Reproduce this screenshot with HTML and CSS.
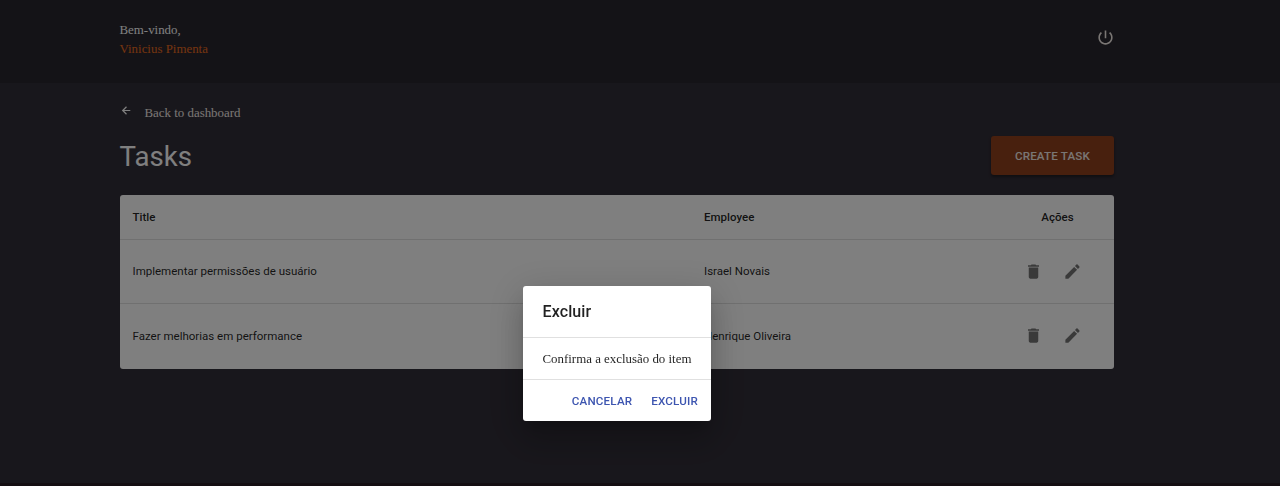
FILE: index.html
```html
<!DOCTYPE html>
<html lang="pt-BR">
<head>
<meta charset="utf-8">
<title>Tasks</title>
<link rel="stylesheet" href="styles.css">
</head>
<body>
<div class="page">
  <header class="header">
    <div class="container header-content">
      <div class="profile"><span>Bem-vindo,</span><span class="name">Vinicius Pimenta</span></div>
      <svg class="power" viewBox="0 0 24 24"><path d="M13 3h-2v10h2V3zm4.830 2.170l-1.420 1.420C17.990 7.860 19 9.810 19 12c0 3.870-3.130 7-7 7s-7-3.130-7-7c0-2.190 1.010-4.140 2.580-5.420L6.170 5.170C4.230 6.820 3 9.260 3 12c0 4.970 4.030 9 9 9s9-4.030 9-9c0-2.740-1.230-5.180-3.170-6.830z"/></svg>
    </div>
  </header>
  <main class="container main">
    <a class="back"><svg class="arrow" viewBox="0 0 24 24"><path d="M19 12H5M12 19l-7-7 7-7"/></svg><span>Back to dashboard</span></a>
    <div class="title-row"><h1>Tasks</h1><button class="create">CREATE TASK</button></div>
    <section class="table">
      <div class="row head"><span>Title</span><span>Employee</span><span class="center">Ações</span></div>
      <div class="row">
        <span>Implementar permissões de usuário</span><span>Israel Novais</span>
        <div class="actions">
          <svg viewBox="0 0 24 24"><path d="M6 19c0 1.100.9 2 2 2h8c1.100 0 2-.9 2-2V7H6v12zM19 4h-3.500l-1-1h-5l-1 1H5v2h14V4z"/></svg>
          <svg viewBox="0 0 24 24"><path d="M3 17.250V21h3.750L17.810 9.940l-3.750-3.750L3 17.250zM20.710 7.040c.39-.39.39-1.020 0-1.410l-2.340-2.340c-.39-.39-1.020-.39-1.410 0l-1.830 1.830 3.750 3.750 1.830-1.830z"/></svg>
        </div>
      </div>
      <div class="row last">
        <span>Fazer melhorias em performance</span><span>Henrique Oliveira</span>
        <div class="actions">
          <svg viewBox="0 0 24 24"><path d="M6 19c0 1.100.9 2 2 2h8c1.100 0 2-.9 2-2V7H6v12zM19 4h-3.500l-1-1h-5l-1 1H5v2h14V4z"/></svg>
          <svg viewBox="0 0 24 24"><path d="M3 17.250V21h3.750L17.810 9.940l-3.750-3.750L3 17.250zM20.710 7.040c.39-.39.39-1.020 0-1.410l-2.340-2.340c-.39-.39-1.020-.39-1.410 0l-1.830 1.830 3.750 3.750 1.830-1.830z"/></svg>
        </div>
      </div>
    </section>
  </main>
</div>
<div class="overlay">
  <div class="dialog" role="dialog">
    <h2>Excluir</h2>
    <div class="content">Confirma a exclusão do item</div>
    <div class="buttons"><button>CANCELAR</button><button>EXCLUIR</button></div>
  </div>
</div>
</body>
</html>
```

FILE: styles.css
```css
* { box-sizing: border-box; margin: 0; padding: 0; }
body { background: #312e38; overflow: hidden; font-family: Roboto, sans-serif; }
button { font-family: inherit; border: 0; background: none; font-weight: 500; }
.page { height: 486px; border-bottom: 3px solid #281c24; }
.container { width: 994.500px; margin-left: 119.500px; }
.header { height: 83px; background: #28262e; }
.header-content { display: flex; justify-content: space-between; padding-top: 20px; }
.profile { display: flex; flex-direction: column; padding-top: 1px; font: 12.900px/19px "Liberation Serif", serif; color: #fff; }
.profile .name { color: #e86b20; }
.power { width: 19px; height: 19px; margin: 8px -1px 0 0; fill: #f4ede8; }
.main { padding-top: 20px; }
.back { display: flex; height: 19px; font: 12.900px/21px "Liberation Serif", serif; color: #f4ede8; }
.arrow { width: 13px; height: 13px; margin: 1px 12px 0 0; fill: none; stroke: #fff; stroke-width: 2.300; }
.title-row { display: flex; justify-content: space-between; align-items: center; height: 39px; margin-top: 14px; }
h1 { padding-top: 2px; font-size: 27.600px; font-weight: 400; color: #fff; }
.create { width: 123px; height: 39px; border-radius: 3px; background: #90401c; color: #f4ede8; font-size: 11.600px; letter-spacing: .18px; box-shadow: 0 2px 3px rgba(0,0,0,.4); }
.table { height: 173.500px; margin-top: 20px; border-radius: 3px; overflow: hidden; background: #fff; color: rgba(0,0,0,.87); font-size: 11.520px; }
.row { display: grid; grid-template-columns: 571.500px 310px 113px; height: 64px; align-items: center; padding-bottom: 1px; border-bottom: 1px solid #e0e0e0; }
.row > span { padding-left: 13px; }
.row > .center { padding: 0; text-align: center; }
.head { height: 45px; padding: 0; font-weight: 500; }
.last { height: 64px; border-bottom: 0; }
.actions { display: flex; gap: 19.500px; padding-left: 23px; }
.actions svg { width: 19px; height: 19px; fill: #757575; }
.overlay { position: fixed; inset: 0; background: rgba(0,0,0,.5); padding: 286px 0 0 522.500px; }
.dialog { width: 188.500px; height: 135.400px; border-radius: 3px; background: #fff; color: rgba(0,0,0,.87); box-shadow: 0 9px 12px -6px rgba(0,0,0,.2), 0 19px 30px 2px rgba(0,0,0,.14), 0 7px 37px 6px rgba(0,0,0,.12); }
h2 { height: 51px; padding-left: 20px; font-size: 16px; font-weight: 500; line-height: 51px; letter-spacing: .12px; }
.content { height: 43px; padding-left: 20px; border: solid #e0e0e0; border-width: 1px 0; font: 12.900px/42px "Liberation Serif", serif; white-space: nowrap; }
.buttons { display: flex; justify-content: flex-end; gap: 19px; height: 41px; padding-right: 13px; }
.buttons button { color: #3d55b0; font-size: 11.600px; letter-spacing: .18px; }
```
